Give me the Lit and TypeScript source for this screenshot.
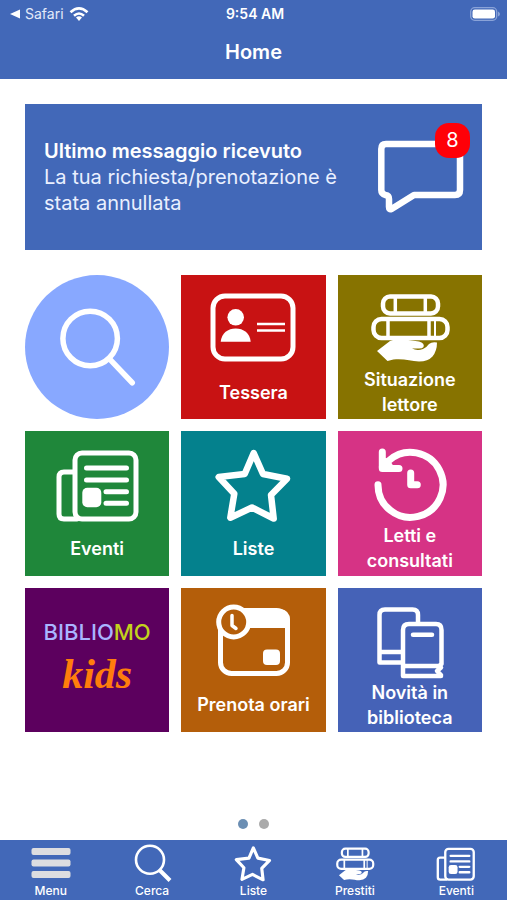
import { LitElement, html, css, svg, TemplateResult, SVGTemplateResult } from "lit";
import { customElement } from "lit/decorators.js";

const books = svg`
  <g fill="none" stroke="currentColor" stroke-width="4.5">
    <rect x="18" y="3.5" width="55" height="17" rx="7" />
    <rect x="8.5" y="26" width="74" height="19" rx="8" />
    <path stroke-width="3.5" d="M30.3 3V21M60.3 3V21M23 26V45M64 26V45" />
    <path stroke-width="2" d="M70 26V45" />
  </g>
  <path fill="currentColor" d="M12 58L25 48Q29 46 36 46L54 48.500Q60 50 58.500 54Q57.500 55.500 54 55.500L47 55.500Q52 58 58 56Q62 54 64 51Q67 48.500 72 49.500Q72 58 67.500 63.500Q63 68.500 54 68.500C44 68.500 36 64 22.500 68Z" />`;

const newspaper = svg`
  <g fill="none" stroke="currentColor" stroke-width="5" stroke-linecap="round">
    <rect x="23" y="4" width="61" height="66" rx="7" />
    <path d="M21 23H12Q7 23 7 28V65Q7 70 12 70H25" />
    <path d="M34.500 19H74.500M34.500 31H74.500M54 42.700H74.500M54 54.300H74.500" />
  </g>
  <rect fill="currentColor" x="30.300" y="38.700" width="19" height="19.500" rx="5" />`;

const star = svg`
  <path fill="none" stroke="currentColor" stroke-width="6.500" stroke-linejoin="round"
    d="M45.700 4L55 25L79 29.700L63 46L65.700 69.500L44 58.500L22.300 68.700L26.300 44.700L10.700 28L36.700 25Z" />`;

const idCard = svg`
  <rect fill="none" stroke="currentColor" stroke-width="5" x="5" y="3" width="80" height="63" rx="12" />
  <circle fill="currentColor" cx="27.700" cy="24.300" r="8.300" />
  <path fill="currentColor" d="M12.700 48.700C13.500 40 20 35.500 27.700 35.500S42 40 42.700 48.700Z" />
  <path fill="none" stroke="currentColor" stroke-width="2.300" d="M49 31H77M49 37.500H77" />`;

const history = svg`
  <g fill="none" stroke="currentColor" stroke-width="7" stroke-linecap="round" stroke-linejoin="round">
    <path d="M13 35.700A32.500 32.500 0 1 0 24 11.500L17.500 18" />
    <path d="M17.300 3V19.500H34" />
    <path d="M45.700 24V35.700H52.300" />
  </g>
  <path fill="currentColor" d="M17 8L24 10L29 18L18 20Z" />`;

const calendar = svg`
  <rect fill="none" stroke="currentColor" stroke-width="5" x="12.500" y="4.500" width="67" height="63" rx="11" />
  <path fill="currentColor" d="M20 3H72Q82 4 82 14V22H20Z" />
  <circle fill="#b45e0a" stroke="currentColor" stroke-width="5" cx="25.700" cy="16" r="15" />
  <path fill="none" stroke="currentColor" stroke-width="3.500" stroke-linecap="round" stroke-linejoin="round" d="M24 9.500V19.500L28 22.500" />
  <rect fill="currentColor" x="55" y="43.500" width="17" height="15.500" rx="4" />`;

const novelties = svg`
  <g fill="none" stroke="currentColor" stroke-width="4.500" stroke-linejoin="round" stroke-linecap="round">
    <path d="M53 17V9Q53 3.500 47.500 3.500H20Q14.500 3.500 14.500 9V56.500H37M14.500 46H37" />
    <path d="M38 70V24Q38 18 44 18H71Q76.500 18 76.500 24V58L74 60H38M38 70H76M76 61.500L72 65L76 69" />
    <path d="M48 28.700H67" />
  </g>`;

const searchSmall = svg`
  <circle fill="none" stroke="currentColor" stroke-width="2.600" cx="19" cy="13.700" r="14" />
  <path stroke="currentColor" stroke-width="4" d="M28.500 24L39 34.500" />`;

const bars = svg`
  <g fill="#dddde0">
    <rect x="1.500" y="2" width="39" height="7" rx="2" />
    <rect x="1.500" y="13.500" width="39" height="7" rx="2" />
    <rect x="1.500" y="25" width="39" height="7" rx="2" />
  </g>`;

interface Tile { label: string; tone: string; art: SVGTemplateResult }
interface Tab { label: string; box: string; art: SVGTemplateResult }

const firstTiles: Tile[] = [
  { label: "Tessera", tone: "red", art: idCard },
  { label: "Situazione lettore", tone: "olive", art: books },
  { label: "Eventi", tone: "green", art: newspaper },
  { label: "Liste", tone: "teal", art: star },
  { label: "Letti e consultati", tone: "pink", art: history },
];

const lastTiles: Tile[] = [
  { label: "Prenota orari", tone: "orange", art: calendar },
  { label: "Novità in biblioteca", tone: "indigo", art: novelties },
];

const tabs: Tab[] = [
  { label: "Menu", box: "0 0 42 35", art: bars },
  { label: "Cerca", box: "0 0 42 35", art: searchSmall },
  { label: "Liste", box: "4 0 82 72", art: star },
  { label: "Prestiti", box: "2 -2 86 72", art: books },
  { label: "Eventi", box: "2 -2 88 75", art: newspaper },
];

@customElement("app-root")
export class AppRoot extends LitElement {
  static styles = css`
    :host {
      display: flex;
      flex-direction: column;
      min-height: 100vh;
      box-sizing: border-box;
      background: #fff;
      color: #fff;
      font-family: Inter, "Liberation Sans", sans-serif;
    }
    * { box-sizing: border-box; }
    svg { display: block; overflow: visible; flex: none; }
    button { border: 0; margin: 0; padding: 0; color: inherit; font: inherit; cursor: pointer; }
    a { color: inherit; text-decoration: none; }

    header { background: #4268b8; }
    .status {
      display: grid;
      grid-template-columns: 1fr auto 1fr;
      align-items: center;
      height: 27px;
      padding: 0 7px 0 10px;
      font-size: 14px;
      line-height: 18px;
    }
    .back { display: flex; align-items: center; gap: 5px; color: #e3eafa; }
    .time { font-weight: 600; }
    .battery { justify-self: end; }
    h1 {
      margin: 0;
      padding: 12px 0 14px;
      font-size: 20px;
      line-height: 26px;
      font-weight: 600;
      text-align: center;
    }

    main { padding: 25px 25px 0; }
    .message {
      display: flex;
      align-items: center;
      justify-content: space-between;
      width: 100%;
      min-height: 146px;
      padding: 16px 16px 16px 19px;
      margin-bottom: 25px;
      background: #4268b8;
      font-size: 20px;
      line-height: 26px;
      text-align: left;
    }
    .text { flex: 0 1 300px; }
    .text strong, .text span { display: block; }
    .text strong { font-weight: 600; }
    .text span { color: #eaf0ff; }
    .bubble { position: relative; }
    .badge {
      position: absolute;
      top: -15px;
      right: -4px;
      width: 35px;
      height: 35px;
      border-radius: 14px;
      background: #ff0008;
      line-height: 35px;
      text-align: center;
    }

    .grid { display: grid; grid-template-columns: repeat(3, 1fr); gap: 12px; }
    .tile {
      display: flex;
      flex-direction: column;
      align-items: center;
      aspect-ratio: 1;
      min-width: 0;
      padding-top: 18px;
      font-size: 18px;
      line-height: 25px;
      font-weight: 600;
    }
    .label {
      display: flex;
      align-items: center;
      justify-content: center;
      width: 120px;
      min-height: 50px;
      text-align: center;
    }
    .search { padding: 0; border-radius: 50%; background: #88a8ff; }
    .search svg { width: 100%; height: 100%; }
    .red { background: #c81213; }
    .olive { background: #877300; }
    .green { background: #1f873a; }
    .teal { background: #04818d; }
    .pink { background: #d63385; }
    .orange { background: #b45e0a; }
    .indigo { background: #4562b7; }
    .kids { background: #5c005e; padding: 0; justify-content: center; }
    .brand { font-size: 22px; line-height: 28px; font-weight: 500; color: #a9b4ff; }
    .brand b { font-weight: 500; color: #c3d21c; }
    .script {
      font: italic 700 42px/56px "Liberation Serif", serif;
      color: #ff7d0c;
    }

    .dots { display: flex; justify-content: center; gap: 11px; margin-top: auto; padding: 24px 0 11px; }
    .dot { width: 10px; height: 10px; border-radius: 50%; background: #aaa; }
    .dot.on { background: #6b8eb3; }

    nav { display: grid; grid-template-columns: repeat(5, 1fr); background: #4268b8; }
    nav a {
      display: flex;
      flex-direction: column;
      align-items: center;
      height: 60px;
      padding-top: 6px;
      gap: 2px;
      font-size: 12px;
      line-height: 16px;
      font-weight: 500;
    }
  `;

  private tile(t: Tile): TemplateResult {
    return html`<button class="tile ${t.tone}">
      <svg width="90" height="74" viewBox="0 0 90 74" aria-hidden="true">${t.art}</svg>
      <span class="label">${t.label}</span>
    </button>`;
  }

  render() {
    return html`
      <header>
        <div class="status">
          <a class="back" href="#safari">
            <svg width="10" height="10" viewBox="0 0 10 10" aria-hidden="true"><path fill="#fff" d="M0 5L10 .5V9.500Z" /></svg>
            <span>Safari</span>
            <svg width="20" height="16" viewBox="0 0 20 16" aria-hidden="true">
              <g fill="none" stroke="#fff" stroke-width="2.600">
                <path d="M1.500 6.200Q10 -1.600 18.500 6.200" />
                <path d="M5 9.800Q10 5.200 15 9.800" />
              </g>
              <path fill="#fff" d="M7 11.500Q10 9.200 13 11.500L10 15Z" />
            </svg>
          </a>
          <span class="time">9:54 AM</span>
          <svg class="battery" width="30" height="14" viewBox="0 0 30 14" role="img" aria-label="Batteria">
            <rect x=".700" y=".700" width="26" height="12.600" rx="4" fill="none" stroke="#8aa3d8" stroke-width="1.300" />
            <rect x="2.500" y="2.500" width="22.500" height="9" rx="2.300" fill="#fff" />
            <path fill="#8aa3d8" d="M28 4.500Q30 5.500 30 7T28 9.500Z" />
          </svg>
        </div>
        <h1>Home</h1>
      </header>

      <main>
        <button class="message">
          <span class="text">
            <strong>Ultimo messaggio ricevuto</strong>
            <span>La tua richiesta/prenotazione è stata annullata</span>
          </span>
          <span class="bubble">
            <svg width="90" height="78" viewBox="0 0 90 78" aria-hidden="true">
              <path fill="none" stroke="#fff" stroke-width="6.500" stroke-linejoin="round"
                d="M10 6H79Q84 6 84 11V52Q84 57 79 57H38L15.500 71Q13 72 13 69V61Q13 57.500 9.500 57Q5.300 56 5.300 52V11Q5.300 6 10 6Z" />
            </svg>
            <span class="badge">8</span>
          </span>
        </button>

        <div class="grid">
          <button class="tile search" aria-label="Cerca">
            <svg viewBox="0 0 144 144" aria-hidden="true">
              <g fill="none" stroke="#fff" stroke-width="5.500" stroke-linecap="round">
                <circle cx="65" cy="63.300" r="27.200" />
                <path d="M84.500 84L107 107.500" />
              </g>
            </svg>
          </button>
          ${firstTiles.map((t) => this.tile(t))}
          <button class="tile kids">
            <span class="brand">BIBLIO<b>MO</b></span>
            <span class="script">kids</span>
          </button>
          ${lastTiles.map((t) => this.tile(t))}
        </div>
      </main>

      <div class="dots"><span class="dot on"></span><span class="dot"></span></div>

      <nav>
        ${tabs.map(
          (t) => html`<a href="#${t.label.toLowerCase()}">
            <svg width="42" height="35" viewBox=${t.box} aria-hidden="true">${t.art}</svg>
            <span>${t.label}</span>
          </a>`
        )}
      </nav>
    `;
  }
}
